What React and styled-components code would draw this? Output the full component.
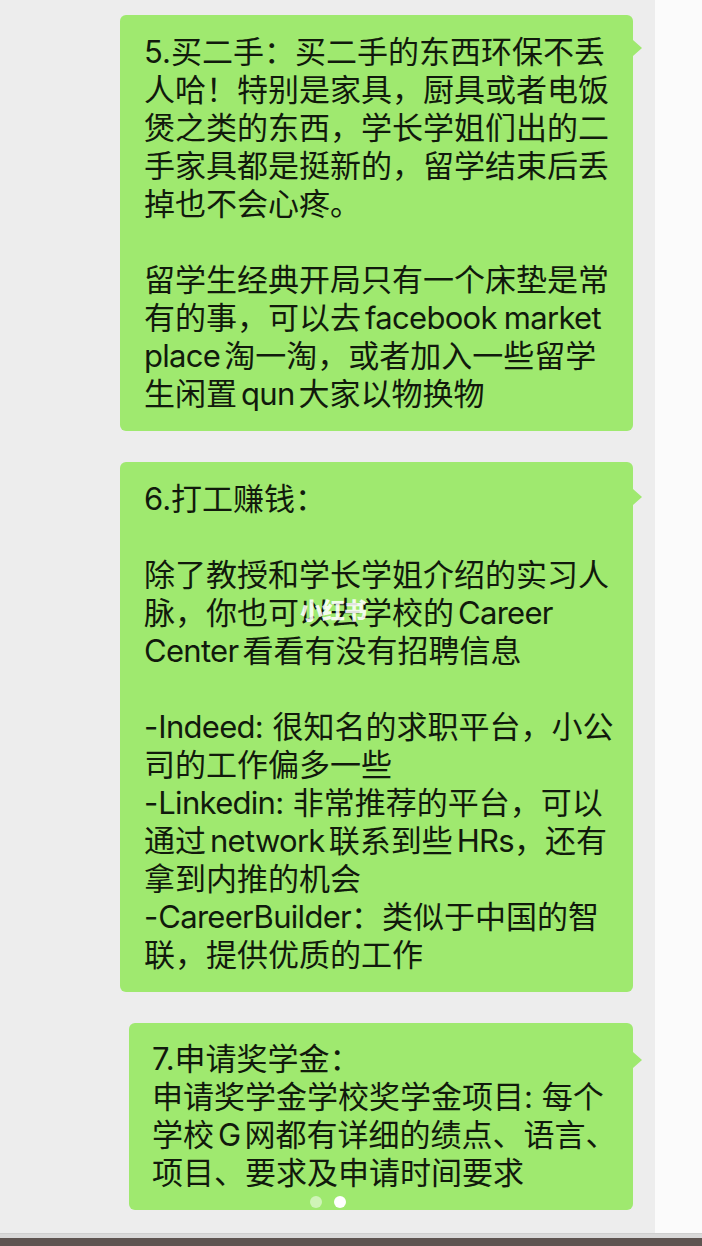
import React from "react";
import styled, { createGlobalStyle } from "styled-components";

const Global = createGlobalStyle`
  html, body { margin: 0; padding: 0; background: #ffffff; }
  #root { width: 702px; }
`;

const Page = styled.div`
  position: relative;
  width: 702px;
  height: 1246px;
  display: flex;
  flex-direction: column;
  overflow: hidden;
  font-family: Inter, "Noto Sans CJK SC", "Noto Sans", sans-serif;
`;

const Main = styled.div`
  flex: 1;
  display: flex;
  min-height: 0;
`;

const Column = styled.div`
  flex: 0 0 655px;
  width: 655px;
  min-width: 0;
  background: #ededed;
  display: flex;
  flex-direction: column;
  align-items: stretch;
  gap: 31px;
  padding: 15px 22px 0 0;
  box-sizing: border-box;
`;

const Strip = styled.div`
  flex: 1;
  background: #fbfbfb;
`;

const Divider = styled.div`
  height: 4px;
  background: #d9d9d9;
  border-top: 1px solid #cfcfcf;
`;

const Footer = styled.div`
  height: 8px;
  background: #5e5451;
`;

const Bubble = styled.div`
  position: relative;
  margin-left: ${(p) => p.$left}px;
  min-width: 0;
  background: #9fe96f;
  border-radius: 6px;
  padding: ${(p) => p.$pad || "18px 10px 18px 24px"};
  color: #111a0c;
  font-size: 31px;
  line-height: 38px;
  &::after {
    content: "";
    position: absolute;
    right: -9px;
    top: ${(p) => p.$tail}px;
    border-style: solid;
    border-width: 8px 0 8px 9px;
    border-color: transparent transparent transparent #9fe96f;
  }
`;

const Line = styled.div`
  white-space: pre;
  height: 38px;
`;

const Latin = styled.span`
  letter-spacing: -0.7px;
  word-spacing: -1px;
  margin-left: ${(p) => (p.$pre ? 4 : 0)}px;
  margin-right: ${(p) => (p.$post ? 4 : 0)}px;
`;

const Watermark = styled.div`
  position: absolute;
  left: 180px;
  top: 134px;
  color: rgba(255, 255, 255, 0.88);
  font-family: "Noto Sans CJK SC", sans-serif;
  font-weight: 900;
  font-size: 23px;
  line-height: 26px;
  letter-spacing: -1px;
`;

const Pager = styled.div`
  position: absolute;
  left: 310px;
  top: 1196px;
  display: flex;
  gap: 12px;
`;

const Dot = styled.span`
  width: 12px;
  height: 12px;
  border-radius: 50%;
  background: ${(p) => (p.$active ? "#ffffff" : "rgba(255,255,255,0.5)")};
`;

const b1 = [
  "5.买二手：买二手的东西环保不丢",
  "人哈！特别是家具，厨具或者电饭",
  "煲之类的东西，学长学姐们出的二",
  "手家具都是挺新的，留学结束后丢",
  "掉也不会心疼。",
  "",
  "留学生经典开局只有一个床垫是常",
  "有的事，可以去 facebook market",
  "place 淘一淘，或者加入一些留学",
  "生闲置 qun 大家以物换物",
];

const b2 = [
  "6.打工赚钱：",
  "",
  "除了教授和学长学姐介绍的实习人",
  "脉，你也可以去学校的 Career",
  "Center 看看有没有招聘信息",
  "",
  "-Indeed: 很知名的求职平台，小公",
  "司的工作偏多一些",
  "-Linkedin: 非常推荐的平台，可以",
  "通过 network 联系到些 HRs，还有",
  "拿到内推的机会",
  "-CareerBuilder：类似于中国的智",
  "联，提供优质的工作",
];

const b3 = [
  "7.申请奖学金：",
  "申请奖学金学校奖学金项目: 每个",
  "学校 G 网都有详细的绩点、语言、",
  "项目、要求及申请时间要求",
];

const renderLine = (text) => {
  const parts = text.split(/( ?[A-Za-z][A-Za-z ]*[A-Za-z] ?| ?[A-Za-z] ?)/);
  return parts.map((part, i) => {
    if (i % 2 === 0) return part;
    const pre = part.startsWith(" ");
    const post = part.endsWith(" ");
    return (
      <Latin key={i} $pre={pre} $post={post}>
        {part.trim()}
      </Latin>
    );
  });
};

const Lines = ({ items }) =>
  items.map((t, i) => <Line key={i}>{renderLine(t)}</Line>);

export default function App() {
  return (
    <Page>
      <Global />
      <Main>
        <Column>
          <Bubble $left={120} $tail={25}>
            <Lines items={b1} />
          </Bubble>
          <Bubble $left={120} $tail={27}>
            <Lines items={b2} />
            <Watermark>小红书</Watermark>
          </Bubble>
          <Bubble $left={129} $tail={29} $pad="17px 10px 18px 23px">
            <Lines items={b3} />
          </Bubble>
        </Column>
        <Strip />
      </Main>
      <Divider />
      <Footer />
      <Pager>
        <Dot />
        <Dot $active />
      </Pager>
    </Page>
  );
}
